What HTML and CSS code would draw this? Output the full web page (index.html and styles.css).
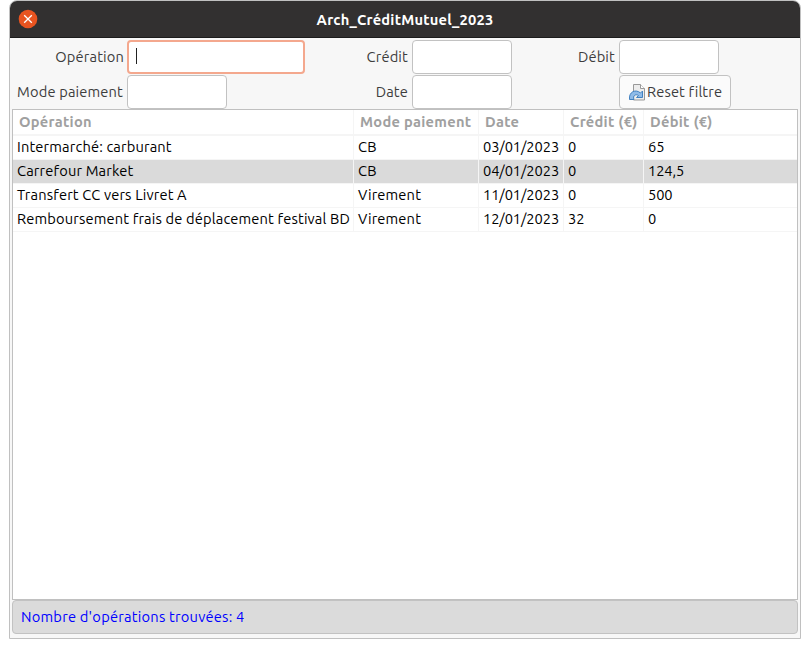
FILE: index.html
```html
<!DOCTYPE html>
<html lang="fr">
<head>
<meta charset="utf-8">
<title>Arch_CréditMutuel_2023</title>
<link rel="stylesheet" href="styles.css">
</head>
<body>
<div class="window">
  <header class="titlebar">
    <svg class="close" viewBox="0 0 20 20"><circle cx="10" cy="10" r="9.3" fill="#e95420"/><path d="M6.2 6.2l7.600 7.600M13.800 6.200l-7.600 7.600" stroke="#fff" stroke-width="1.3"/></svg>
    <h1>Arch_CréditMutuel_2023</h1>
  </header>
  <form class="filters">
    <label class="first">Opération</label><div class="field wide focused"><span class="caret"></span></div>
    <label>Crédit</label><div class="field"></div>
    <label>Débit</label><div class="field"></div>
    <label>Mode paiement</label><div class="field"></div>
    <label>Date</label><div class="field"></div>
    <span></span>
    <button type="button" class="reset">
      <svg viewBox="0 0 16 17"><path d="M4.500.5h7l4 4v11.500h-11z" fill="#ededed" stroke="#999"/><path d="M11.500.5v4h4" fill="#fff" stroke="#999"/><path d="M.5 15.500C-.5 8 6.500 4.500 11.500 9l2-2v6.500H7.500l2-2C6.500 9.500 3.500 12 5 15.500z" fill="#8fbbe8" stroke="#4382c1"/></svg>
      <span>Reset filtre</span>
    </button>
  </form>
  <main class="table">
    <div class="row head"><span>Opération</span><span>Mode paiement</span><span>Date</span><span>Crédit (€)</span><span>Débit (€)</span></div>
    <div class="row"><span>Intermarché: carburant</span><span>CB</span><span class="num">03/01/2023</span><span class="num">0</span><span class="num">65</span></div>
    <div class="row selected"><span>Carrefour Market</span><span>CB</span><span class="num">04/01/2023</span><span class="num">0</span><span class="num">124,5</span></div>
    <div class="row"><span>Transfert CC vers Livret A</span><span>Virement</span><span class="num">11/01/2023</span><span class="num">0</span><span class="num">500</span></div>
    <div class="row"><span>Remboursement frais de déplacement festival BD</span><span>Virement</span><span class="num">12/01/2023</span><span class="num">32</span><span class="num">0</span></div>
  </main>
  <footer class="status">Nombre d'opérations trouvées: 4</footer>
</div>
</body>
</html>
```
FILE: styles.css
```css
* { box-sizing: border-box; }
body {
  margin: 0;
  padding: 0 9px;
  background: #fff;
  font: 14.667px/20px Ubuntu, "Noto Sans", sans-serif;
  letter-spacing: .15px;
  color: #3d3d3d;
}
.window {
  height: 639px;
  border: 1px solid #c0c0c0;
  border-radius: 8px 8px 0 0;
  background: #f7f7f7;
  display: flex;
  flex-direction: column;
  overflow: hidden;
}
.titlebar {
  height: 37px;
  flex: none;
  background: #323030;
  border-bottom: 1px solid #1c1c1c;
  display: grid;
  grid-template-columns: 20px 1fr 20px;
  align-items: center;
  padding: 0 8px;
}
.close { width: 20px; height: 20px; }
.titlebar h1 {
  margin: 1px 0 0;
  font-size: 14.667px;
  letter-spacing: .22px;
  color: #fff;
  text-align: center;
}
.filters {
  display: grid;
  grid-template-columns: 117px 178px 107px 100px 107px 112px;
  grid-template-rows: 34px 34px;
  row-gap: 1px;
  padding-top: 2px;
  height: 71px;
  flex: none;
}
.filters label { text-align: right; padding: 7px 4px 0 0; white-space: nowrap; }
.filters .first { padding-right: 3px; }
.field {
  width: 100px;
  border: 1px solid #c2c2c2;
  border-radius: 4px;
  background: #fff;
}
.field.wide { width: 178px; }
.field.focused { border: 2px solid #f4a88e; padding: 6px 0 0 7px; }
.caret { display: block; width: 1px; height: 16px; background: #222; }
.reset {
  border: 1px solid #c2c2c2;
  border-radius: 4px;
  background: #fbfbfb;
  color: #3d3d3d;
  font: inherit;
  letter-spacing: .12px;
  padding: 0 0 0 9px;
  display: flex;
  align-items: center;
  gap: 2px;
  white-space: nowrap;
}
.reset svg { width: 16px; height: 17px; }
.table {
  flex: 1;
  margin: 0 2px;
  border: 1px solid #c0c0c0;
  background: #fff;
  color: #000;
}
.row {
  display: grid;
  grid-template-columns: 341px 125px 85px 80px 1fr;
  height: 24px;
  border-bottom: 1px solid #f5f5f5;
}
.row span {
  padding: 1px 0 0 4px;
  border-right: 1px solid #f5f5f5;
  white-space: nowrap;
}
.row span:last-child { border-right: 0; }
.row .num { letter-spacing: -.08px; }
.head {
  height: 26px;
  border-bottom-width: 2px;
  color: #a0a0a0;
  font-weight: bold;
  letter-spacing: .28px;
}
.head span { padding: 2px 0 0 6px; }
.selected { background: #dadada; }
.status {
  height: 34px;
  flex: none;
  margin: 0 2px 4px;
  border: 1px solid #c2c2c2;
  border-radius: 4px;
  background: #dbdbdb;
  color: #00f;
  letter-spacing: .22px;
  padding: 6px 8px;
}
```
